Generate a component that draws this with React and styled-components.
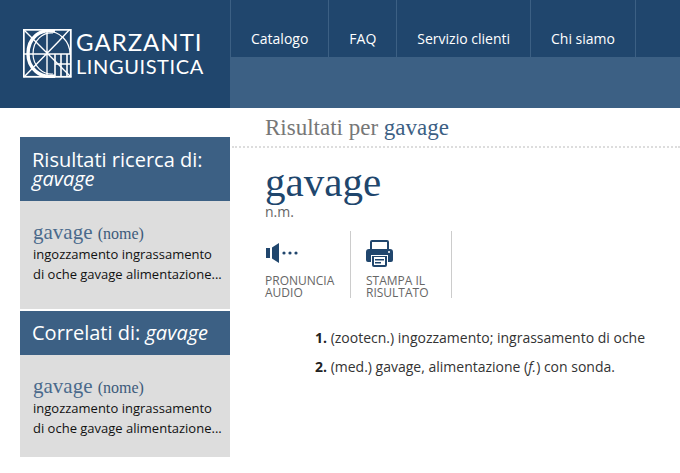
import React from "react";
import styled, { createGlobalStyle } from "styled-components";

const GlobalStyle = createGlobalStyle`
  html, body {
    margin: 0;
    padding: 0;
    background: #ffffff;
    font-family: "Open Sans", "Liberation Sans", sans-serif;
    overflow: hidden;
  }
`;

const Page = styled.div`
  width: 680px;
  height: 473px;
  overflow: hidden;
`;

const Header = styled.header`
  display: flex;
  height: 108px;
  background: #20466d;
`;

const LogoPanel = styled.div`
  width: 230px;
  display: flex;
  align-items: center;
  padding: 0 0 1px 23px;
  box-sizing: border-box;
  gap: 4px;
`;

const LogoText = styled.div`
  color: #ffffff;
  font-family: "Lato", "Open Sans", sans-serif;
  white-space: nowrap;
`;

const LogoLine = styled.div`
  font-size: ${(p) => p.$size}px;
  line-height: 25px;
  letter-spacing: ${(p) => p.$spacing}px;
`;

const NavColumn = styled.div`
  flex: 1;
  display: flex;
  flex-direction: column;
`;

const Nav = styled.nav`
  display: flex;
  height: 57px;
  border-left: 1px solid #3c6084;
`;

const NavItem = styled.a`
  color: #ffffff;
  font-size: 14px;
  line-height: 19px;
  padding: 29px 20px 0;
  border-right: 1px solid #3c6084;
  box-sizing: border-box;
`;

const SubBar = styled.div`
  flex: 1;
  background: #3c6084;
`;

const Content = styled.div`
  display: flex;
`;

const Sidebar = styled.aside`
  width: 210px;
  margin: 29px 0 0 20px;
  display: flex;
  flex-direction: column;
  gap: 2px;
`;

const PanelHead = styled.h2`
  margin: 0;
  background: #3c6084;
  color: #ffffff;
  font-size: 20px;
  line-height: ${(p) => p.$line}px;
  font-weight: 400;
  padding: ${(p) => p.$pad};
`;

const PanelBody = styled.div`
  background: #dddddd;
  height: ${(p) => p.$height}px;
  padding: 21px 0 0 13px;
  box-sizing: border-box;
`;

const EntryWord = styled.div`
  font-family: "Liberation Serif", serif;
  font-size: 21px;
  line-height: 21px;
  color: #4a6a8c;
`;

const EntryKind = styled.span`
  font-size: 16px;
  color: #3c5a7a;
`;

const EntryText = styled.div`
  font-size: 13px;
  line-height: 20px;
  color: #111111;
  white-space: nowrap;
`;

const Main = styled.main`
  flex: 1;
  padding-top: 8px;
`;

const ResultsTitle = styled.h3`
  margin: 0 0 0 2px;
  padding: 0 0 0 33px;
  height: 32px;
  font-family: "Liberation Serif", serif;
  font-size: 23px;
  line-height: 24px;
  font-weight: 400;
  color: #777777;
  border-bottom: 2px dotted #dddddd;
  box-sizing: border-box;
`;

const ResultWord = styled.span`
  color: #3c6084;
`;

const Entry = styled.div`
  padding: 12px 0 0 35px;
`;

const Word = styled.h1`
  margin: 0;
  font-family: "Liberation Serif", serif;
  font-size: 41px;
  line-height: 44px;
  font-weight: 400;
  color: #20466d;
`;

const Grammar = styled.div`
  font-size: 14px;
  line-height: 16px;
  color: #666666;
`;

const Actions = styled.div`
  display: flex;
  margin-top: 11px;
  height: 67px;
`;

const Action = styled.div`
  width: ${(p) => p.$width}px;
  border-right: 1px solid #cccccc;
  padding-left: ${(p) => p.$pad}px;
  box-sizing: border-box;
`;

const ActionIcon = styled.div`
  height: 44px;
  display: flex;
  align-items: center;
`;

const ActionLabel = styled.div`
  font-size: 12px;
  line-height: 12px;
  color: #666666;
  text-transform: uppercase;
  white-space: nowrap;
`;

const Definitions = styled.ol`
  list-style: none;
  margin: 29px 0 0;
  padding: 0 0 0 50px;
  font-size: 14px;
  line-height: 22px;
  color: #333333;
`;

const Definition = styled.li`
  margin-bottom: 7px;
  white-space: nowrap;
`;

const Num = styled.b`
  color: #222222;
`;

const Logo = () => (
  <svg width="49" height="49" viewBox="0 0 49 49" fill="none" stroke="#fff" strokeWidth="1.4">
    <rect x="0.8" y="0.8" width="47" height="47" strokeWidth="1.8" />
    <path d="M1 1L48 48M1 48L36 12M36 12L47 0M1 25H48M24 1V48" />
    <path d="M32 2C17 -1 5 9 5 25C5 39 17 50 32 47" strokeWidth="3.4" />
    <path d="M30 4C20 3 10 11 10 25C10 37 20 46 30 45" strokeWidth="1.2" />
    <path d="M32 25V48M38 25V48M44 25V48M48 35H32" strokeWidth="1.6" />
    <path d="M24 2A23 23 0 0 1 47 25" strokeWidth="1.2" />
  </svg>
);

const Speaker = () => (
  <svg width="33" height="20" viewBox="0 0 33 20" fill="#20466d">
    <rect x="1" y="5" width="4" height="10" />
    <path d="M7 4.5L14 0V20L7 15.5Z" />
    <circle cx="19" cy="10" r="1.6" />
    <circle cx="25" cy="10" r="1.6" />
    <circle cx="31" cy="10" r="1.6" />
  </svg>
);

const Printer = () => (
  <svg width="27" height="27" viewBox="0 0 27 27">
    <path fill="#20466d" d="M6 0H21A2 2 0 0 1 23 2V9H4V2A2 2 0 0 1 6 0Z" />
    <rect x="6" y="2" width="15" height="7" fill="#fff" />
    <path fill="#20466d" d="M3 9H24A3 3 0 0 1 27 12V20A2 2 0 0 1 25 22H22V15H5V22H2A2 2 0 0 1 0 20V12A3 3 0 0 1 3 9Z" />
    <path fill="#20466d" d="M6 16H21V25A2 2 0 0 1 19 27H8A2 2 0 0 1 6 25Z" />
    <rect x="8" y="17" width="11" height="8" fill="#fff" />
    <rect x="9" y="19" width="9" height="1.5" fill="#20466d" />
    <rect x="9" y="22" width="6" height="1.5" fill="#20466d" />
    <circle cx="23" cy="12" r="1" fill="#fff" />
  </svg>
);

const SidebarEntry = () => (
  <>
    <EntryWord>
      gavage <EntryKind>(nome)</EntryKind>
    </EntryWord>
    <EntryText>ingozzamento ingrassamento</EntryText>
    <EntryText>di oche gavage alimentazione...</EntryText>
  </>
);

export default function App() {
  return (
    <Page>
      <GlobalStyle />
      <Header>
        <LogoPanel>
          <Logo />
          <LogoText>
            <LogoLine $size={24} $spacing={1}>GARZANTI</LogoLine>
            <LogoLine $size={20} $spacing={0.6}>LINGUISTICA</LogoLine>
          </LogoText>
        </LogoPanel>
        <NavColumn>
          <Nav>
            <NavItem>Catalogo</NavItem>
            <NavItem>FAQ</NavItem>
            <NavItem>Servizio clienti</NavItem>
            <NavItem>Chi siamo</NavItem>
          </Nav>
          <SubBar />
        </NavColumn>
      </Header>
      <Content>
        <Sidebar>
          <div>
            <PanelHead $line={19} $pad="13px 12px 13px">
              Risultati ricerca di:
              <br />
              <i>gavage</i>
            </PanelHead>
            <PanelBody $height={108}>
              <SidebarEntry />
            </PanelBody>
          </div>
          <div>
            <PanelHead $line={22} $pad="11px 12px 11px">
              Correlati di: <i>gavage</i>
            </PanelHead>
            <PanelBody $height={102}>
              <SidebarEntry />
            </PanelBody>
          </div>
        </Sidebar>
        <Main>
          <ResultsTitle>
            Risultati per <ResultWord>gavage</ResultWord>
          </ResultsTitle>
          <Entry>
            <Word>gavage</Word>
            <Grammar>n.m.</Grammar>
            <Actions>
              <Action $width={86} $pad={0}>
                <ActionIcon>
                  <Speaker />
                </ActionIcon>
                <ActionLabel>
                  Pronuncia
                  <br />
                  audio
                </ActionLabel>
              </Action>
              <Action $width={101} $pad={15}>
                <ActionIcon>
                  <Printer />
                </ActionIcon>
                <ActionLabel>
                  Stampa il
                  <br />
                  risultato
                </ActionLabel>
              </Action>
            </Actions>
            <Definitions>
              <Definition>
                <Num>1.</Num> (zootecn.) ingozzamento; ingrassamento di oche
              </Definition>
              <Definition>
                <Num>2.</Num> (med.) gavage, alimentazione (<i>f.</i>) con sonda.
              </Definition>
            </Definitions>
          </Entry>
        </Main>
      </Content>
    </Page>
  );
}
